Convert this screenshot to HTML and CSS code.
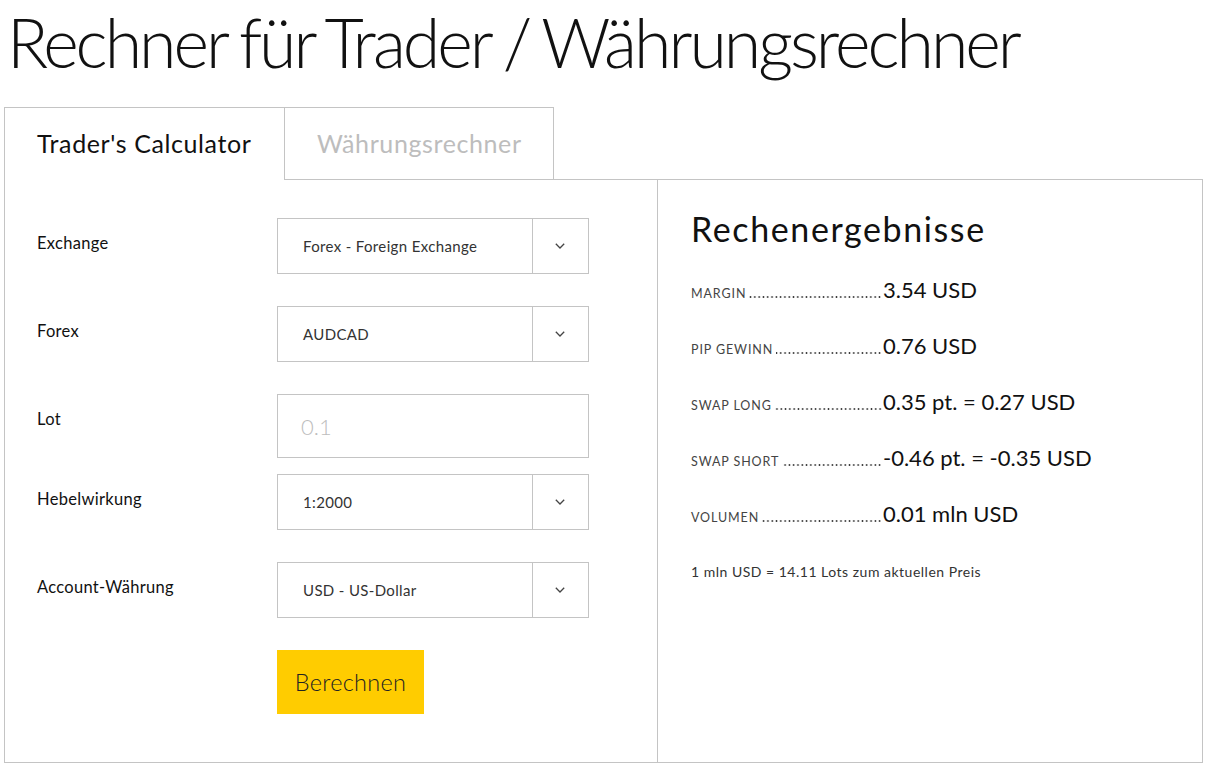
FILE: index.html
```html
<!DOCTYPE html>
<html lang="de">
<head>
<meta charset="utf-8">
<title>Rechner für Trader / Währungsrechner</title>
<link rel="stylesheet" href="styles.css">
</head>
<body>
<h1 class="page-title">Rechner für Trader / Währungsrechner</h1>
<div class="calc">
  <div class="tabs">
    <div class="tab tab--active">Trader's Calculator</div>
    <div class="tab tab--inactive">Währungsrechner</div>
    <div class="tabs-fill"></div>
  </div>
  <div class="calc-body">
    <form class="form">
      <div class="row">
        <label class="label">Exchange</label>
        <div class="select">
          <span class="select-value">Forex - Foreign Exchange</span>
          <span class="select-arrow"><svg width="10" height="6" viewBox="0 0 10 6"><polyline points="0.8,0.8 5,5 9.2,0.8" fill="none" stroke="#444" stroke-width="1.3"/></svg></span>
        </div>
      </div>
      <div class="row">
        <label class="label">Forex</label>
        <div class="select">
          <span class="select-value">AUDCAD</span>
          <span class="select-arrow"><svg width="10" height="6" viewBox="0 0 10 6"><polyline points="0.8,0.8 5,5 9.2,0.8" fill="none" stroke="#444" stroke-width="1.3"/></svg></span>
        </div>
      </div>
      <div class="row">
        <label class="label">Lot</label>
        <input class="input" type="text" placeholder="0.1">
      </div>
      <div class="row row--tight">
        <label class="label">Hebelwirkung</label>
        <div class="select">
          <span class="select-value">1:2000</span>
          <span class="select-arrow"><svg width="10" height="6" viewBox="0 0 10 6"><polyline points="0.8,0.8 5,5 9.2,0.8" fill="none" stroke="#444" stroke-width="1.3"/></svg></span>
        </div>
      </div>
      <div class="row">
        <label class="label">Account-Währung</label>
        <div class="select">
          <span class="select-value">USD - US-Dollar</span>
          <span class="select-arrow"><svg width="10" height="6" viewBox="0 0 10 6"><polyline points="0.8,0.8 5,5 9.2,0.8" fill="none" stroke="#444" stroke-width="1.3"/></svg></span>
        </div>
      </div>
      <div class="row">
        <span class="label"></span>
        <button class="btn" type="button">Berechnen</button>
      </div>
    </form>
    <section class="results">
      <h2 class="results-title">Rechenergebnisse</h2>
      <div class="res-row"><span class="res-label"><span class="res-name">MARGIN</span><span class="res-dots"></span></span><span class="res-value">3.54 USD</span></div>
      <div class="res-row"><span class="res-label"><span class="res-name">PIP GEWINN</span><span class="res-dots"></span></span><span class="res-value">0.76 USD</span></div>
      <div class="res-row"><span class="res-label"><span class="res-name">SWAP LONG</span><span class="res-dots"></span></span><span class="res-value">0.35 pt. = 0.27 USD</span></div>
      <div class="res-row"><span class="res-label"><span class="res-name">SWAP SHORT</span><span class="res-dots"></span></span><span class="res-value">-0.46 pt. = -0.35 USD</span></div>
      <div class="res-row"><span class="res-label"><span class="res-name">VOLUMEN</span><span class="res-dots"></span></span><span class="res-value">0.01 mln USD</span></div>
      <p class="res-note">1 mln USD = 14.11 Lots zum aktuellen Preis</p>
    </section>
  </div>
</div>
</body>
</html>
```

FILE: styles.css
```css
* { box-sizing: border-box; }

body {
  margin: 0;
  background: #fff;
  font-family: "Lato", "Liberation Sans", sans-serif;
  color: #111;
}

.page-title {
  margin: 0 0 24px 0;
  padding-left: 7px;
  font-size: 68px;
  line-height: 83px;
  font-weight: 300;
  letter-spacing: -3px;
  word-spacing: -2px;
  color: #111;
  white-space: nowrap;
}

.calc {
  margin-left: 4px;
  width: 1200px;
}

.tabs {
  display: flex;
  height: 73px;
}

.tab {
  display: flex;
  align-items: center;
  font-size: 25px;
  letter-spacing: 0.6px;
  padding-left: 32px;
  padding-bottom: 2px;
  border-top: 1px solid #c4c4c4;
  white-space: nowrap;
}

.tab--active {
  width: 280px;
  border-left: 1px solid #c4c4c4;
  color: #111;
}

.tab--inactive {
  width: 270px;
  border: 1px solid #c4c4c4;
  color: #bdbdbd;
}

.tabs-fill {
  flex: 1;
  border-bottom: 1px solid #c4c4c4;
  margin-right: 1px;
}

.calc-body {
  display: flex;
  height: 583px;
}

.form {
  width: 653px;
  border-left: 1px solid #c4c4c4;
  border-bottom: 1px solid #c4c4c4;
  padding: 38px 0 0 32px;
  display: flex;
  flex-direction: column;
}

.row {
  display: flex;
  align-items: flex-start;
  margin-top: 32px;
}

.row:first-child { margin-top: 0; }
.row--tight { margin-top: 16px; }

.label {
  width: 240px;
  font-size: 16.5px;
  letter-spacing: 0.3px;
  line-height: 20px;
  padding-top: 15px;
  color: #111;
}

.select {
  width: 312px;
  height: 56px;
  border: 1px solid #c4c4c4;
  display: flex;
  align-items: stretch;
}

.select-value {
  flex: 1;
  display: flex;
  align-items: center;
  padding-left: 25px;
  font-size: 15px;
  letter-spacing: 0.35px;
  color: #333;
}

.select-arrow {
  width: 56px;
  border-left: 1px solid #c4c4c4;
  display: flex;
  align-items: center;
  justify-content: center;
  padding-right: 1px;
}

.input {
  width: 312px;
  height: 64px;
  border: 1px solid #c4c4c4;
  padding: 0 0 0 23px;
  font-family: "Lato", "Liberation Sans", sans-serif;
  font-size: 22px;
  font-weight: 300;
  outline: none;
  background: #fff;
}

.input::placeholder { color: #bdbdbd; }

.btn {
  width: 147px;
  height: 64px;
  border: none;
  background: #ffcc00;
  font-family: "Lato", "Liberation Sans", sans-serif;
  font-size: 23.5px;
  letter-spacing: 0.3px;
  font-weight: 300;
  color: #222;
  padding: 0;
}

.results {
  flex: 1;
  border-left: 1px solid #c4c4c4;
  border-right: 1px solid #c4c4c4;
  border-bottom: 1px solid #c4c4c4;
  margin-right: 1px;
  padding: 29px 0 0 33px;
}

.results-title {
  margin: 0 0 13px 0;
  font-size: 34px;
  letter-spacing: 1.6px;
  line-height: 40px;
  font-weight: 400;
  color: #111;
}

.res-row {
  display: flex;
  align-items: baseline;
  height: 56px;
  line-height: 56px;
}

.res-label {
  width: 192px;
  display: flex;
  align-items: baseline;
  white-space: nowrap;
  font-size: 12.5px;
  color: #444;
}

.res-name {
  letter-spacing: 0.9px;
  padding-right: 3px;
}

.res-dots {
  flex: 1;
  height: 2px;
  margin-right: 1px;
  background-image: radial-gradient(circle, #3a3a3a 0.75px, transparent 1.1px);
  background-size: 4.3px 2px;
  background-repeat: repeat-x;
  background-position: right bottom;
}

.res-value {
  font-size: 22px;
  color: #111;
  white-space: nowrap;
}

.res-note {
  margin: 20px 0 0 0;
  font-size: 14px;
  letter-spacing: 0.5px;
  line-height: 20px;
  color: #333;
}
```
